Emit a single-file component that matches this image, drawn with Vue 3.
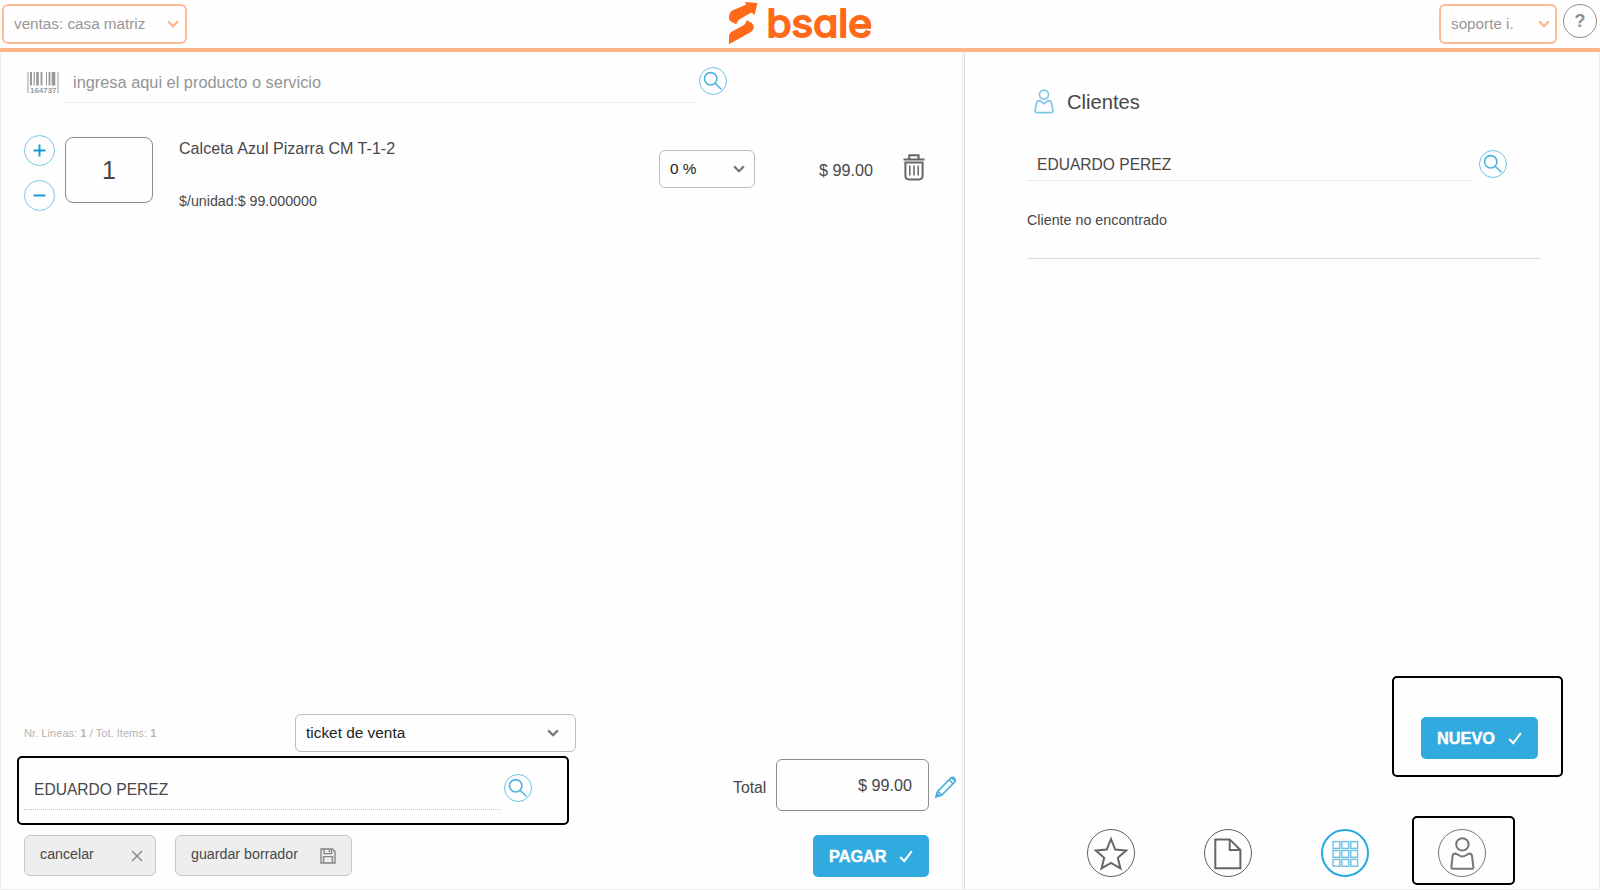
<template>
  <div class="pos">
    <header class="topbar">
      <button class="top-select branch">
        <span>ventas: casa matriz</span>
        <svg class="chevron" viewBox="0 0 12 8"><path d="M1.2 1.4 6 6.2 10.8 1.4" /></svg>
      </button>
      <svg class="logo" viewBox="0 0 150 46">
        <path d="M15.6 2 28.5 3.1 25.6 15 22.6 12.6 10.6 19.2Q8.2 20.8 7.2 24.2L1.8 21.4Q-.2 20 0 17.2Q0 12.6 3.4 10.6L17.3 4.4Z" />
        <path d="M0 44.2V36.4Q0 33 3 31.4L14.6 25.2Q17.2 23.6 17.6 20.2L22.8 23Q25.2 24.8 24.8 27.4Q24.4 30.8 21.6 32.2Z" />
        <text x="37.5" y="37.4" textLength="105.5" lengthAdjust="spacingAndGlyphs">bsale</text>
      </svg>
      <button class="top-select user">
        <span>soporte i.</span>
        <svg class="chevron" viewBox="0 0 12 8"><path d="M1.2 1.4 6 6.2 10.8 1.4" /></svg>
      </button>
      <button class="help">?</button>
    </header>

    <main class="content">
      <section class="sale">
        <div class="search-row">
          <svg class="barcode" viewBox="0 0 32 22">
            <path v-for="bar in bars" :key="bar.x" :d="`M${bar.x} 0V${bar.h}`" :stroke-width="bar.w" />
            <text x="3" y="20.8" textLength="26.5" lengthAdjust="spacingAndGlyphs">164737</text>
          </svg>
          <div class="field product-field">ingresa aqui el producto o servicio</div>
          <button class="search-btn">
            <svg viewBox="0 0 28 28"><circle cx="11.7" cy="11.8" r="6.2" /><path d="m16.2 16.3 6.3 6.2" /></svg>
          </button>
        </div>

        <div v-for="item in items" :key="item.name" class="item">
          <div class="steppers">
            <button class="step"><svg viewBox="0 0 31 31"><path d="M9.5 15.5h12M15.5 9.5v12" /></svg></button>
            <button class="step"><svg viewBox="0 0 31 31"><path d="M9.5 15.5h12" /></svg></button>
          </div>
          <div class="qty">{{ item.qty }}</div>
          <div class="item-info">
            <div class="item-name">{{ item.name }}</div>
            <div class="item-unit">$/unidad:{{ item.unit }}</div>
          </div>
          <button class="select discount">
            <span>{{ item.discount }}</span>
            <svg class="chevron" viewBox="0 0 12 8"><path d="M1.2 1.4 6 6.2 10.8 1.4" /></svg>
          </button>
          <div class="item-price">{{ item.price }}</div>
          <svg class="trash" viewBox="0 0 22 27">
            <path d="M.5 5.6h21M6.2 5V1.2h9.4V5" />
            <path d="M2.4 8.4h17.2v13.4q0 3.6-3.6 3.6H6q-3.6 0-3.6-3.6Z" />
            <path class="thin" d="M6.8 11.6v10M11 11.6v10M15.2 11.6v10" />
          </svg>
        </div>

        <footer class="sale-footer">
          <div class="doc-row">
            <div class="counter">Nr. Lineas: <b>1</b> / Tot. Items: <b>1</b></div>
            <button class="select doc-type">
              <span>ticket de venta</span>
              <svg class="chevron" viewBox="0 0 12 8"><path d="M1.2 1.4 6 6.2 10.8 1.4" /></svg>
            </button>
          </div>
          <div class="client-row">
            <div class="highlight client-box">
              <div class="field">EDUARDO PEREZ</div>
              <button class="search-btn">
                <svg viewBox="0 0 28 28"><circle cx="11.7" cy="11.8" r="6.2" /><path d="m16.2 16.3 6.3 6.2" /></svg>
              </button>
            </div>
            <div class="total-label">Total</div>
            <div class="total">$ 99.00</div>
            <svg class="pencil" viewBox="0 0 22 22">
              <path d="M1 20.6 2.6 15.4 15.4 2.4q2-2 4 0t0 4L6.6 19.2Z" />
              <path d="m2.8 15.4 3.8 3.8M14 3.8l4 4M16.6 1.6l3.6 3.6" />
              <path class="tip" d="m1 20.8 1-3.2 2.2 2.2Z" />
            </svg>
          </div>
          <div class="action-row">
            <button class="grey-btn cancel">
              <span>cancelar</span>
              <svg viewBox="0 0 12 12"><path d="m1 1 10 10M11 1 1 11" /></svg>
            </button>
            <button class="grey-btn draft">
              <span>guardar borrador</span>
              <svg viewBox="0 0 16 16">
                <path d="M1 1h11.4L15 3.6V15H1Z" />
                <path d="M4 1v4.6h7.6V1M9.4 2v2.2M3.6 15V8.6h8.8V15" />
              </svg>
            </button>
            <button class="blue-btn pay">
              <span>PAGAR</span>
              <svg viewBox="0 0 14 13"><path d="M1.2 7 5.2 11.2 12.8 1.2" /></svg>
            </button>
          </div>
        </footer>
      </section>

      <aside class="clients">
        <h2 class="clients-title">
          <svg viewBox="0 0 20 25">
            <circle cx="10" cy="5.6" r="4.5" />
            <path d="M6 11.6Q3 11.6 2.5 14.2L1.2 21.2Q.8 23.6 3.2 23.6H16.8Q19.2 23.6 18.8 21.2L17.5 14.2Q17 11.6 14 11.6L10 14.8Z" />
          </svg>
          Clientes
        </h2>
        <div class="client-search">
          <div class="field">EDUARDO PEREZ</div>
          <button class="search-btn">
            <svg viewBox="0 0 28 28"><circle cx="11.7" cy="11.8" r="6.2" /><path d="m16.2 16.3 6.3 6.2" /></svg>
          </button>
        </div>
        <p class="not-found">Cliente no encontrado</p>

        <div class="highlight new-box">
          <button class="blue-btn new">
            <span>NUEVO</span>
            <svg viewBox="0 0 14 13"><path d="M1.2 7 5.2 11.2 12.8 1.2" /></svg>
          </button>
        </div>

        <nav class="tabs">
          <button class="tab">
            <svg viewBox="0 0 48 48"><path d="m24 10 4.2 10.6 11 .9-8.4 7.3 2.7 10.6L24 34 14.5 39.4l2.7-10.6-8.4-7.3 11-.9Z" /></svg>
          </button>
          <button class="tab">
            <svg viewBox="0 0 48 48"><path d="M11.3 10.4h14.4L36.4 21v18.2H11.3ZM25.7 10.4V21h10.7" /></svg>
          </button>
          <button class="tab active">
            <svg viewBox="0 0 48 48">
              <rect v-for="n in 9" :key="n" :x="12 + ((n - 1) % 3) * 8.9" :y="12.6 + Math.floor((n - 1) / 3) * 8.9" width="6.8" height="6.8" />
            </svg>
          </button>
          <div class="highlight user-box">
            <button class="tab person">
              <svg viewBox="0 0 48 48">
                <circle cx="24.4" cy="15.4" r="6.2" />
                <path d="M17.4 24.6Q15 24.6 14.6 27L13.4 38.2Q13.2 39.8 14.8 39.8H34Q35.6 39.8 35.4 38.2L34 27Q33.6 24.6 31.4 24.6C29 25 27.4 27.6 24.4 27.6S20 25 17.4 24.6Z" />
              </svg>
            </button>
          </div>
        </nav>
      </aside>
    </main>
  </div>
</template>

<script setup>
const items = [
  { qty: 1, name: 'Calceta Azul Pizarra CM T-1-2', unit: '$ 99.000000', discount: '0 %', price: '$ 99.00' }
]

const bars = [
  { x: 1, w: 1, h: 21 },
  { x: 4, w: 2, h: 13.5 },
  { x: 7.2, w: 1.2, h: 13.5 },
  { x: 10.5, w: 2.6, h: 13.5 },
  { x: 14.5, w: 1.8, h: 13.5 },
  { x: 19.5, w: 1, h: 13.5 },
  { x: 22.5, w: 1.8, h: 13.5 },
  { x: 26.5, w: 3.6, h: 13.5 },
  { x: 31, w: 1, h: 21 }
]
</script>

<style>
body {
  margin: 0;
  background: #fefefe;
}
</style>

<style scoped>
* {
  box-sizing: border-box;
}

.pos {
  width: 1600px;
  height: 890px;
  display: flex;
  flex-direction: column;
  overflow: hidden;
  font-family: "Liberation Sans", Arial, sans-serif;
  color: #484848;
  background: #fefefe;
}

button {
  padding: 0;
  margin: 0;
  font-family: inherit;
  color: inherit;
  background: none;
  border: none;
  flex-shrink: 0;
}

svg {
  display: block;
  flex-shrink: 0;
  fill: none;
  stroke: currentColor;
}

span,
.field {
  white-space: nowrap;
}

/* barra superior */
.topbar {
  height: 52px;
  flex-shrink: 0;
  display: flex;
  align-items: flex-start;
  border-bottom: 4px solid #ffb48c;
}

.top-select {
  height: 40px;
  margin-top: 4px;
  padding: 0 6px 0 9px;
  display: flex;
  align-items: center;
  justify-content: space-between;
  border: 2px solid #ffba96;
  border-radius: 6px;
  font-size: 15.25px;
  color: #979797;
}

.top-select span {
  margin-bottom: 1px;
}

.branch {
  width: 185px;
  margin-left: 2px;
  padding-left: 10px;
}

.user {
  width: 118px;
  margin-left: 560px;
  padding: 0 5px 0 10px;
}

.chevron {
  width: 12px;
  height: 8px;
  stroke-width: 2.2;
}

.top-select .chevron {
  margin-bottom: 1px;
  color: #ffb48c;
}

.logo {
  width: 150px;
  height: 46px;
  margin-left: 542px;
  fill: #ff6a1a;
  stroke: none;
}

.logo text {
  font: 400 37.5px Inter, sans-serif;
  font-feature-settings: "cv11";
  stroke: #ff6a1a;
  stroke-width: 2;
  stroke-linejoin: round;
}

.help {
  width: 34px;
  height: 34px;
  margin: 4px 0 0 6px;
  border: 1.5px solid #8f8f8f;
  border-radius: 50%;
  font-size: 18px;
  font-weight: bold;
  color: #8f8f8f;
}

.content {
  flex: 1;
  display: flex;
  border: 1px solid #eeeeee;
  border-top: none;
}

/* panel de venta */
.sale {
  width: 963px;
  display: flex;
  flex-direction: column;
  border-right: 3px solid #f3f5f7;
}

.field {
  border-bottom: 1px dotted #dddddd;
  font-size: 15.6px;
  padding-left: 10px;
}

.search-btn {
  width: 28px;
  height: 28px;
  border: 1px solid #6fc2e5;
  border-radius: 50%;
  color: #4fb3de;
}

.search-btn svg {
  width: 28px;
  height: 28px;
  margin: -1px;
  stroke-width: 1.6;
}

.search-row {
  display: flex;
  height: 83px;
  padding-left: 26px;
}

.barcode {
  width: 32px;
  height: 22px;
  margin-top: 20px;
  color: #999999;
}

.barcode text {
  font-size: 8px;
  font-weight: bold;
  fill: #999999;
  stroke: none;
}

.product-field {
  width: 633px;
  height: 41px;
  margin: 10px 0 0 3px;
  padding-left: 11px;
  line-height: 40px;
  font-size: 16.35px;
  color: #949494;
}

.search-row .search-btn {
  margin: 15px 0 0 4px;
}

.item {
  display: flex;
  align-items: flex-start;
  height: 76px;
  padding-left: 23px;
}

.steppers {
  display: flex;
  flex-direction: column;
  gap: 14px;
}

.step {
  width: 31px;
  height: 31px;
  border: 1px solid #7cc8ea;
  border-radius: 50%;
  color: #189bd2;
}

.step svg {
  width: 31px;
  height: 31px;
  margin: -1px;
  stroke-width: 2;
}

.qty {
  width: 88px;
  height: 66px;
  margin: 2px 0 0 10px;
  border: 1.5px solid #8c8c8c;
  border-radius: 8px;
  text-align: center;
  line-height: 65px;
  font-size: 25px;
}

.item-info {
  width: 480px;
  margin-left: 26px;
  padding-top: 3px;
  display: flex;
  flex-direction: column;
  gap: 33px;
  line-height: 20px;
}

.item-name {
  font-size: 16.1px;
}

.item-unit {
  font-size: 14.25px;
}

.select {
  height: 38px;
  display: flex;
  align-items: center;
  justify-content: space-between;
  border: 1px solid #bcbcbc;
  border-radius: 6px;
  font-size: 15.4px;
  color: #222222;
}

.select .chevron {
  color: #777777;
}

.discount {
  width: 96px;
  margin-top: 15px;
  padding: 0 9px 0 10px;
}

.item-price {
  width: 118px;
  margin-top: 25px;
  line-height: 20px;
  font-size: 16.2px;
  text-align: right;
}

.trash {
  width: 22px;
  height: 27px;
  margin: 19px 0 0 30px;
  color: #666666;
  stroke-width: 2;
}

.trash .thin {
  stroke-width: 1.5;
}

.sale-footer {
  margin-top: auto;
  padding-bottom: 12px;
}

.doc-row {
  display: flex;
  align-items: center;
  padding-left: 23px;
}

.counter {
  width: 271px;
  font-size: 11.15px;
  color: #b5b5b5;
}

.doc-type {
  width: 281px;
  padding: 0 16px 0 10px;
}

.highlight {
  border: 2px solid #000000;
  border-radius: 5px;
}

.client-row {
  display: flex;
  margin-top: 4px;
  padding-left: 16px;
}

.client-box {
  width: 552px;
  height: 69px;
  margin-bottom: 1px;
  display: flex;
  padding-left: 5px;
}

.client-box .field {
  width: 476px;
  height: 52px;
  line-height: 63px;
  border-bottom-color: #c0c0c0;
}

.client-box .search-btn {
  margin: 16px 0 0 4px;
}

.total-label {
  width: 43px;
  margin-left: 164px;
  line-height: 63px;
  font-size: 15.8px;
}

.total {
  width: 153px;
  height: 52px;
  margin-top: 3px;
  padding-right: 16px;
  border: 1.5px solid #8c8c8c;
  border-radius: 6px;
  text-align: right;
  line-height: 50px;
  font-size: 16.2px;
}

.pencil {
  width: 22px;
  height: 22px;
  margin: 20px 0 0 6px;
  color: #45aedb;
  stroke-width: 1.5;
}

.pencil .tip {
  fill: currentColor;
}

.action-row {
  display: flex;
  margin-top: 9px;
  padding-left: 23px;
}

.grey-btn {
  height: 41px;
  display: flex;
  align-items: center;
  justify-content: space-between;
  padding: 0 12px 0 15px;
  background: #eeeeee;
  border: 1px solid #c6c6c6;
  border-radius: 6px;
  font-size: 14.25px;
}

.grey-btn span {
  margin-bottom: 3px;
}

.grey-btn svg {
  color: #858585;
}

.cancel {
  width: 132px;
}

.cancel svg {
  width: 12px;
  height: 12px;
  margin-top: 1px;
  stroke-width: 1.4;
}

.draft {
  width: 177px;
  margin-left: 19px;
  padding-right: 15px;
}

.draft svg {
  width: 16px;
  height: 16px;
  margin-top: 1px;
  stroke-width: 1.4;
}

.blue-btn {
  height: 42px;
  display: flex;
  align-items: center;
  justify-content: space-between;
  padding: 0 16px;
  background: #31aadf;
  border-radius: 5px;
  font-size: 16.3px;
  font-weight: bold;
  color: #ffffff;
  -webkit-text-stroke: 0.4px #ffffff;
}

.blue-btn svg {
  width: 14px;
  height: 13px;
  stroke-width: 2;
}

.pay {
  width: 116px;
  margin-left: 461px;
}

/* panel de clientes */
.clients {
  flex: 1;
  display: flex;
  flex-direction: column;
  padding-left: 62px;
  border-left: 1px solid #d9dce0;
}

.clients-title {
  display: flex;
  align-items: center;
  gap: 13px;
  height: 25px;
  margin: 37px 0 0 7px;
  line-height: 28px;
  font-size: 20.2px;
  font-weight: normal;
}

.clients-title svg {
  width: 20px;
  height: 25px;
  color: #7bc5e8;
  stroke-width: 1.6;
}

.client-search {
  display: flex;
  margin-top: 36px;
}

.client-search .field {
  width: 447px;
  height: 31px;
  line-height: 30px;
}

.client-search .search-btn {
  margin-left: 5px;
}

.not-found {
  width: 514px;
  height: 78px;
  margin: 0;
  line-height: 78px;
  border-bottom: 1px solid #dcdcdc;
  font-size: 14.3px;
}

.new-box {
  width: 171px;
  height: 101px;
  margin: auto 36px 0 auto;
  padding: 39px 0 0 27px;
}

.new {
  width: 117px;
}

.tabs {
  display: flex;
  align-items: center;
  gap: 69px;
  height: 70px;
  margin: 38px 0 4px 60px;
}

.tab {
  width: 48px;
  height: 48px;
  margin-top: 5px;
  border: 1.5px solid #5f5f5f;
  border-radius: 50%;
  color: #666666;
}

.tab svg {
  width: 48px;
  height: 48px;
  margin: -1px;
  stroke-width: 2;
}

.tab.active {
  border: 2px solid #2aa9e1;
  color: #6fbfe2;
}

.tab.active svg {
  margin: -2px;
  stroke-width: 1.4;
}

.person {
  border-color: #777777;
  color: #777777;
}

.user-box {
  width: 103px;
  height: 69px;
  margin-left: -26px;
  padding: 6px 0 0 24px;
}
</style>
